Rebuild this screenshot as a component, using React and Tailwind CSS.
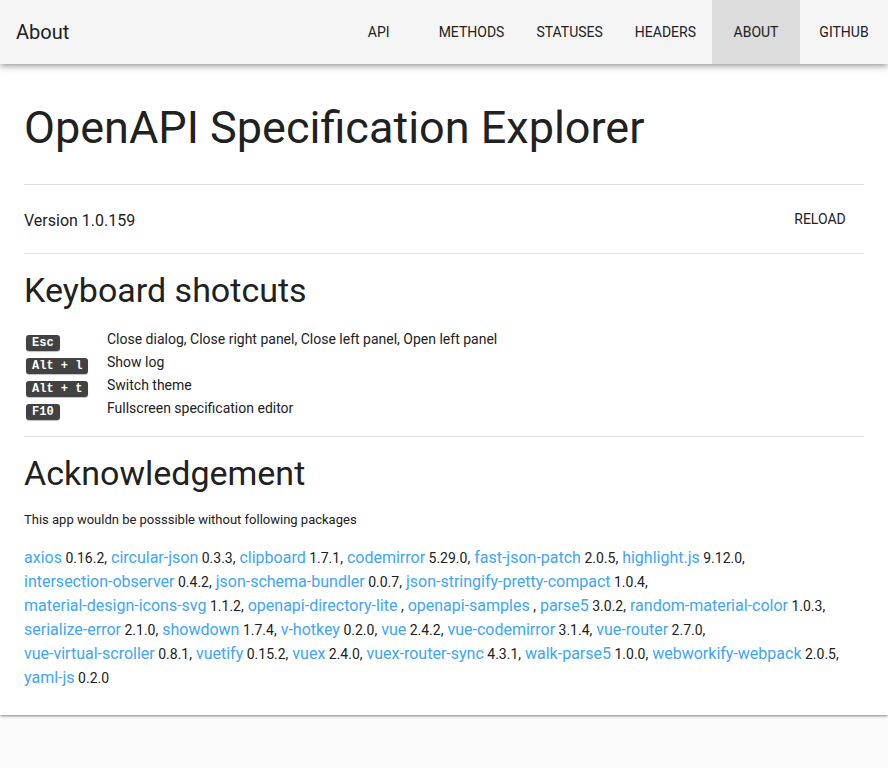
const navItems = ["API", "METHODS", "STATUSES", "HEADERS", "ABOUT", "GITHUB"]

const shortcuts = [
  { keys: "Esc", text: "Close dialog, Close right panel, Close left panel, Open left panel" },
  { keys: "Alt + l", text: "Show log" },
  { keys: "Alt + t", text: "Switch theme" },
  { keys: "F10", text: "Fullscreen specification editor" }
]

const packages = [
  ["axios", "0.16.2"],
  ["circular-json", "0.3.3"],
  ["clipboard", "1.7.1"],
  ["codemirror", "5.29.0"],
  ["fast-json-patch", "2.0.5"],
  ["highlight.js", "9.12.0"],
  ["intersection-observer", "0.4.2"],
  ["json-schema-bundler", "0.0.7"],
  ["json-stringify-pretty-compact", "1.0.4"],
  ["material-design-icons-svg", "1.1.2"],
  ["openapi-directory-lite", ""],
  ["openapi-samples", ""],
  ["parse5", "3.0.2"],
  ["random-material-color", "1.0.3"],
  ["serialize-error", "2.1.0"],
  ["showdown", "1.7.4"],
  ["v-hotkey", "0.2.0"],
  ["vue", "2.4.2"],
  ["vue-codemirror", "3.1.4"],
  ["vue-router", "2.7.0"],
  ["vue-virtual-scroller", "0.8.1"],
  ["vuetify", "0.15.2"],
  ["vuex", "2.4.0"],
  ["vuex-router-sync", "4.3.1"],
  ["walk-parse5", "1.0.0"],
  ["webworkify-webpack", "2.0.5"],
  ["yaml-js", "0.2.0"]
]

export default function App() {
  return (
    <div className="min-h-[768px] bg-[#fafafa] font-['Roboto',sans-serif] text-[#212121]">
      {/* toolbar */}
      <header className="relative z-10 flex h-16 items-center bg-[#f5f5f5] shadow-[0_2px_4px_-1px_rgba(0,0,0,0.2),0_4px_5px_0_rgba(0,0,0,0.14),0_1px_10px_0_rgba(0,0,0,0.12)]">
        <div className="ml-4 text-[20px] font-normal">About</div>
        <nav className="ml-auto flex h-full">
          {navItems.map((n) => (
            <div
              key={n}
              className={
                "flex h-full min-w-[88px] items-center justify-center px-4 text-[14px] font-normal " +
                (n === "ABOUT" ? "bg-[#dcdcdc]" : "")
              }
            >
              {n}
            </div>
          ))}
        </nav>
      </header>

      {/* card */}
      <main className="bg-white px-6 pb-[25px] pt-10 shadow-[0_2px_2px_-1px_rgba(0,0,0,0.3),0_1px_3px_0_rgba(0,0,0,0.14),0_1px_4px_0_rgba(0,0,0,0.1)]">
        <h1 className="text-[45px] leading-[48px] font-normal">OpenAPI Specification Explorer</h1>
        <hr className="mt-8 border-t border-[#e0e0e0]" />

        <div className="flex h-[68px] items-center justify-between">
          <div className="pt-1 text-[16px]">Version 1.0.159</div>
          <div className="flex h-9 min-w-[88px] items-center justify-center px-4 text-[14px] font-normal">RELOAD</div>
        </div>
        <hr className="border-t border-[#e0e0e0]" />

        <h2 className="mt-4 text-[34px] leading-10 font-normal">Keyboard shotcuts</h2>
        <div className="mt-[18px] flex flex-col">
          {shortcuts.map((s) => (
            <div key={s.keys} className="flex h-[23px] items-center">
              <div className="w-[83px] pl-0.5 pt-0.5">
                <kbd className="inline-block rounded-[3px] bg-[#424242] px-[6px] font-['Liberation_Mono',monospace] text-[12px] leading-4 font-bold text-white shadow-[0_1px_1px_0_rgba(0,0,0,0.25)]">
                  {s.keys}
                </kbd>
              </div>
              <div className="text-[14px]">{s.text}</div>
            </div>
          ))}
        </div>
        <hr className="mt-4 border-t border-[#e0e0e0]" />

        <h2 className="mt-4 text-[34px] leading-10 font-normal">Acknowledgement</h2>
        <p className="mt-[17px] text-[13px] leading-5">This app wouldn be posssible without following packages</p>
        <div className="mt-4 text-[16px] leading-6">
          {packages.map(([name, ver], i) => (
            <span key={name}>
              <span className="whitespace-nowrap">
                <a className="text-[#42a5f5]">{name}</a>
                <span className="text-[14px]">
                  {" "}
                  {ver}
                  {i < packages.length - 1 ? "," : ""}
                </span>
              </span>{" "}
            </span>
          ))}
        </div>
      </main>
    </div>
  )
}
